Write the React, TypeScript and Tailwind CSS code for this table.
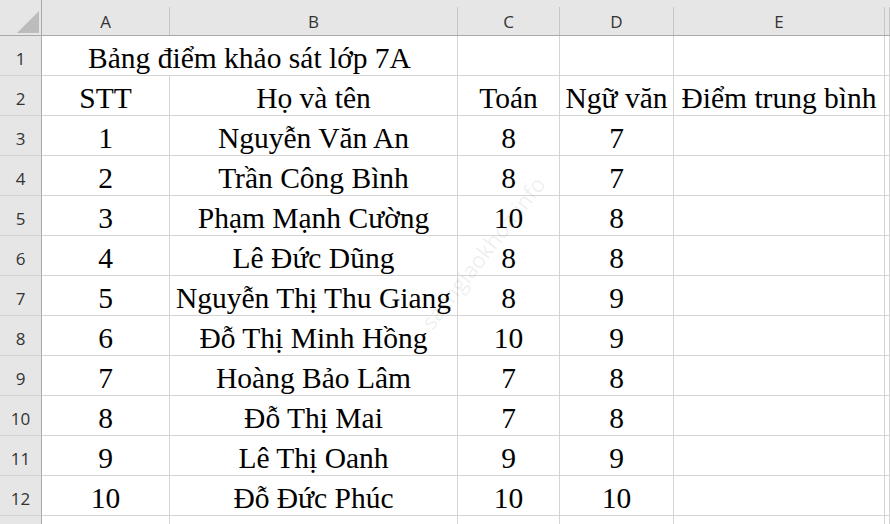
import React from "react";

const COLS = ["A", "B", "C", "D", "E", ""];

const ROWS: [string, string, string, string][] = [
  ["1", "Nguyễn Văn An", "8", "7"],
  ["2", "Trần Công Bình", "8", "7"],
  ["3", "Phạm Mạnh Cường", "10", "8"],
  ["4", "Lê Đức Dũng", "8", "8"],
  ["5", "Nguyễn Thị Thu Giang", "8", "9"],
  ["6", "Đỗ Thị Minh Hồng", "10", "9"],
  ["7", "Hoàng Bảo Lâm", "7", "8"],
  ["8", "Đỗ Thị Mai", "7", "8"],
  ["9", "Lê Thị Oanh", "9", "9"],
  ["10", "Đỗ Đức Phúc", "10", "10"],
];

const serif = { fontFamily: '"Liberation Serif", "Times New Roman", serif' };
const ui = { fontFamily: '"Open Sans", "Noto Sans", sans-serif' };

function RowHead({ n }: { n?: number }) {
  return (
    <div
      className="flex h-[40px] items-center justify-center border-b border-r border-b-[#d0d0d0] border-r-[#a9a9a9] bg-[#e6e6e6] pt-[6px] text-[17px] text-[#333]"
      style={ui}
    >
      {n}
    </div>
  );
}

function Cell({ children, span }: { children?: React.ReactNode; span?: boolean }) {
  return (
    <div
      className={`flex h-[40px] items-end justify-center whitespace-nowrap border-b border-r border-[#d4d4d4] bg-white pb-[2px] text-[29.5px] leading-none text-black ${
        span ? "col-span-2" : ""
      }`}
      style={serif}
    >
      {children}
    </div>
  );
}

export default function App() {
  return (
    <div className="relative h-[524px] w-[890px] overflow-hidden bg-white">
      <div className="grid grid-cols-[42px_128px_288px_102px_114px_211px_1fr]">
        {/* corner */}
        <div className="relative h-[36px] border-b border-r border-[#a9a9a9] bg-[#e6e6e6]">
          <svg className="absolute left-0 top-0" width="42" height="36">
            <polygon points="17,33 39,11 39,33" fill="#bcbcbc" />
          </svg>
        </div>
        {COLS.map((c, i) => (
          <div key={i} className="flex h-[36px] items-end border-b border-[#a9a9a9] bg-[#e6e6e6]">
            <div
              className="flex h-[28px] w-full items-center justify-center border-r border-[#c6c6c6] pt-[2px] text-[17px] text-[#333]"
              style={ui}
            >
              {c}
            </div>
          </div>
        ))}

        <RowHead n={1} />
        <Cell span>Bảng điểm khảo sát lớp 7A</Cell>
        <Cell />
        <Cell />
        <Cell />
        <Cell />

        <RowHead n={2} />
        <Cell>STT</Cell>
        <Cell>Họ và tên</Cell>
        <Cell>Toán</Cell>
        <Cell>Ngữ văn</Cell>
        <Cell>Điểm trung bình</Cell>
        <Cell />

        {ROWS.map((r, i) => (
          <React.Fragment key={i}>
            <RowHead n={i + 3} />
            <Cell>{r[0]}</Cell>
            <Cell>{r[1]}</Cell>
            <Cell>{r[2]}</Cell>
            <Cell>{r[3]}</Cell>
            <Cell />
            <Cell />
          </React.Fragment>
        ))}

        {/* row 13, only its top edge shows */}
        <RowHead />
        <Cell />
        <Cell />
        <Cell />
        <Cell />
        <Cell />
        <Cell />
      </div>

      {/* watermark */}
      <div
        className="pointer-events-none absolute left-[390px] top-[236px] -rotate-[52deg] text-[22px] text-black/[0.08]"
        style={ui}
      >
        sachgiaokhoa.info
      </div>
    </div>
  );
}
